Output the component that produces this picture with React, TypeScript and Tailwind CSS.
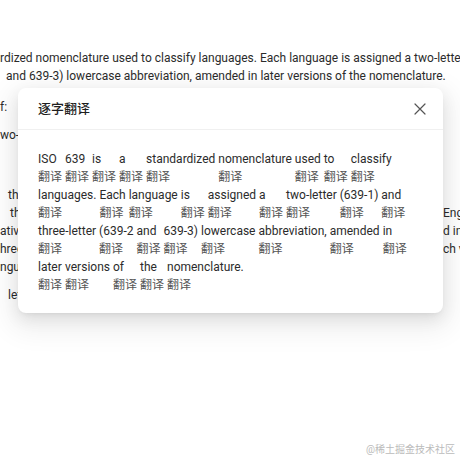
const lines = [
  ["ISO", "639", "is", "a", "standardized", "nomenclature", "used", "to", "classify"],
  ["languages.", "Each", "language", "is", "assigned", "a", "two-letter", "(639-1)", "and"],
  ["three-letter", "(639-2", "and", "639-3)", "lowercase", "abbreviation,", "amended", "in"],
  ["later", "versions", "of", "the", "nomenclature."],
];

function Word({ text }: { text: string }) {
  return (
    <span className="flex flex-col items-start shrink-0 whitespace-nowrap min-w-[24px]">
      <span className="text-[12px] leading-[18px] text-[#2b2b2b]">{text}</span>
      <span className="text-[12px] leading-[18px] text-[#555]">翻译</span>
    </span>
  );
}

function CloseIcon() {
  return (
    <svg width="12" height="12" viewBox="0 0 12 12" fill="none" stroke="#555" strokeWidth="1.2" strokeLinecap="round">
      <path d="M1 1l10 10M11 1L1 11" />
    </svg>
  );
}

export default function App() {
  return (
    <div
      className="relative w-[460px] h-[460px] overflow-hidden bg-white text-[12px] text-[#2b2b2b]"
      style={{ fontFamily: 'Roboto, "Noto Sans CJK SC", sans-serif' }}
    >
      {/* page behind the dialog */}
      <div className="pt-[49px] whitespace-nowrap leading-[18px]">
        <div className="h-[18px]">rdized nomenclature used to classify languages. Each language is assigned a two-letter</div>
        <div className="h-[18px] pl-[6px]">and 639-3) lowercase abbreviation, amended in later versions of the nomenclature.</div>
        <div className="h-[18px] mt-[13px]">f:</div>
        <div className="h-[18px] mt-[10px]">wo-letter codes</div>
        <div className="h-[18px] mt-[42px] pl-[8px]">three-letter</div>
        <div className="h-[18px] flex">
          <span className="w-[443px] shrink-0 pl-[10px]">three-letter</span>
          <span>English</span>
        </div>
        <div className="h-[18px] flex">
          <span className="w-[443px] shrink-0">atives</span>
          <span>d in</span>
        </div>
        <div className="h-[18px] flex">
          <span className="w-[443px] shrink-0">hree</span>
          <span>ch v</span>
        </div>
        <div className="h-[18px]">nguage</div>
        <div className="h-[18px] mt-[10px] pl-[8px]">left</div>
      </div>

      {/* dialog */}
      <div className="absolute left-[18px] top-[88px] w-[425px] rounded-lg bg-white shadow-[0_6px_16px_0_rgba(0,0,0,0.08),0_3px_6px_-4px_rgba(0,0,0,0.12),0_9px_28px_8px_rgba(0,0,0,0.07)]">
        <div className="h-[42px] flex items-center justify-between pl-[20px] pr-[17px] border-b border-[#f0f0f0]">
          <span className="text-[13px] font-medium text-[#1f1f1f]">逐字翻译</span>
          <CloseIcon />
        </div>
        <div className="px-[20px] pt-[20px] pb-[19px]">
          {lines.map((line, i) => (
            <div key={i} className="flex gap-x-[3px]">
              {line.map((w, j) => (
                <Word key={j} text={w} />
              ))}
            </div>
          ))}
        </div>
      </div>

      <div className="absolute right-[5px] bottom-[3px] text-[10px] text-[#bbb]">@稀土掘金技术社区</div>
    </div>
  );
}
